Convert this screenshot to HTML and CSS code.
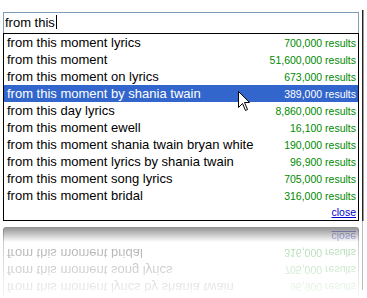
FILE: index.html
```html
<!DOCTYPE html>
<html lang="en">
<head>
    <meta charset="UTF-8">
    <title>Suggest</title>
    <link rel="stylesheet" href="styles.css">
</head>
<body>

    <div class="frame">
        <div class="panel">
            <div class="query">from this<span class="caret"></span></div>
            <div class="list">
                <div class="row"><span class="term">from this moment lyrics</span><span class="count">700,000 results</span></div>
                <div class="row"><span class="term">from this moment</span><span class="count">51,600,000 results</span></div>
                <div class="row"><span class="term">from this moment on lyrics</span><span class="count">673,000 results</span></div>
                <div class="row active"><span class="term">from this moment by shania twain</span><span class="count">389,000 results</span></div>
                <div class="row"><span class="term">from this day lyrics</span><span class="count">8,860,000 results</span></div>
                <div class="row"><span class="term">from this moment ewell</span><span class="count">16,100 results</span></div>
                <div class="row"><span class="term">from this moment shania twain bryan white</span><span class="count">190,000 results</span></div>
                <div class="row"><span class="term">from this moment lyrics by shania twain</span><span class="count">96,900 results</span></div>
                <div class="row"><span class="term">from this moment song lyrics</span><span class="count">705,000 results</span></div>
                <div class="row"><span class="term">from this moment bridal</span><span class="count">316,000 results</span></div>
                <div class="close-row"><a href="#" class="close">close</a></div>
            </div>
            <svg class="pointer" width="14" height="21" viewBox="0 0 14 21">
                <path d="M0.5 0.5 L0.5 16.5 L4.5 12.5 L7.5 19.5 L9.5 18.5 L6.5 11.5 L11.5 11.5 Z" fill="#fff" stroke="#000" stroke-width="1"/>
            </svg>
        </div>
        <div class="edge"></div>
    </div>

    <div class="mirror">
        <div class="mirror-fade">
            <div class="mirror-list">
                <div class="row"><span class="term">from this moment lyrics by shania twain</span><span class="count">96,900 results</span></div>
                <div class="row"><span class="term">from this moment song lyrics</span><span class="count">705,000 results</span></div>
                <div class="row"><span class="term">from this moment bridal</span><span class="count">316,000 results</span></div>
                <div class="close-row"><a href="#" class="close">close</a></div>
            </div>
        </div>
        <div class="edge faint"></div>
        <div class="shade"></div>
    </div>

</body>
</html>
```

FILE: styles.css
```css
/* --- Global Setup --- */
body, html {
    margin: 0;
    padding: 0;
    background-color: #fff;
    font-family: 'Liberation Sans', Arial, sans-serif;
    overflow: hidden;
}

/* --- Suggest box --- */
.frame {
    display: flex;
    padding: 10px 0 0 3px;
    height: 211px;
}

.panel {
    position: relative;
    width: 356px;
    padding-top: 2px;
}

.query {
    height: 20px;
    border: 1px solid #7f9db9;
    border-bottom: none;
    font-size: 13px;
    line-height: 20px;
    padding-left: 1px;
    color: #000;
}
.caret {
    display: inline-block;
    width: 1px; height: 14px;
    background: #000;
    margin-left: 1px;
    vertical-align: -2px;
}

.list {
    border: 1px solid #000;
}

.row {
    display: flex; justify-content: space-between; align-items: center;
    height: 17px; padding: 0 2px 0 3px;
}
.row .term { font-size: 13px; color: #000; white-space: nowrap; }
.row .count { font-size: 10.5px; color: #008a00; white-space: nowrap; }
.row.active { background-color: #3366cc; }
.row.active .term, .row.active .count { color: #fff; }

.close-row {
    height: 16px; display: flex; justify-content: flex-end; align-items: center;
    padding-right: 2px;
}
.close { font-size: 10.5px; color: #0000cc; text-decoration: underline; }

.pointer {
    position: absolute; left: 235px; top: 81px;
}

.edge {
    width: 1px; margin-left: 3px;
    background: #222; box-shadow: 1px 0 0 #999;
}

/* --- Reflection --- */
.mirror {
    position: relative;
    display: flex;
    padding-left: 3px;
    height: 77px;
}
.mirror-fade {
    width: 356px;
    padding-top: 8px;
    -webkit-mask-image: linear-gradient(to bottom, rgba(0,0,0,0.45), rgba(0,0,0,0.04));
    mask-image: linear-gradient(to bottom, rgba(0,0,0,0.45), rgba(0,0,0,0.04));
}
.mirror-list {
    transform: scaleY(-1);
    border-left: 1px solid #666;
    border-right: 1px solid #666;
}
.edge.faint { background: #bbb; box-shadow: none; margin-bottom: 8px; }

.shade {
    position: absolute; left: 3px; top: 6px;
    width: 356px; height: 15px;
    border-radius: 3px 3px 0 0;
    background: linear-gradient(rgba(70,70,70,0.6), rgba(255,255,255,0));
}
```
